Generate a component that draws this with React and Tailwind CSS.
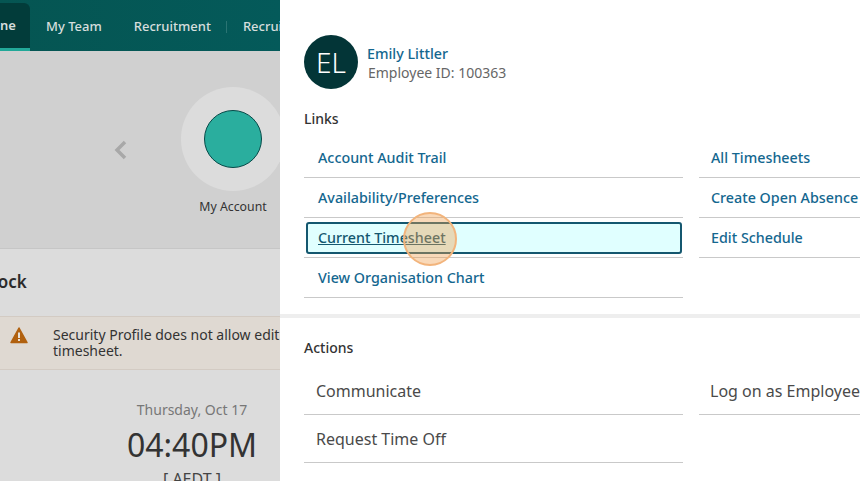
import React from "react";

const linksLeft = ["Account Audit Trail", "Availability/Preferences", "Current Timesheet", "View Organisation Chart"];
const linksRight = ["All Timesheets", "Create Open Absence", "Edit Schedule"];

const LinkRow = ({ label, right }) => {
  if (label === "Current Timesheet") {
    return (
      <div className="h-10 border-b border-[#c9c9c9] flex items-center relative">
        <div className="ml-[2px] h-[32px] w-[376px] bg-[#e0ffff] border-2 border-[#14576f] rounded-[3px] flex items-center pl-[10px]">
          <span className="text-[14.3px] font-medium text-[#14576f] underline whitespace-nowrap">{label}</span>
        </div>
        {/* click marker */}
        <div className="absolute left-[99px] top-[-6px] w-[54px] h-[54px] rounded-full bg-[#f0a050]/40 border-2 border-[#f2b47c]"></div>
      </div>
    );
  }
  return (
    <div className={`h-10 border-b border-[#c9c9c9] flex items-center ${right ? "pl-3" : "pl-[14px]"}`}>
      <span className="text-[14.3px] font-medium text-[#14678f] whitespace-nowrap">{label}</span>
    </div>
  );
};

const ActionRow = ({ label, right }) => (
  <div className={`h-12 border-b border-[#c9c9c9] flex items-center ${right ? "pl-[11px]" : "pl-3"}`}>
    <span className="text-[16px] text-[#4a4a4a] whitespace-nowrap">{label}</span>
  </div>
);

const App = () => {
  return (
    <div className="flex w-[860px] h-[481px] overflow-hidden bg-white font-['Noto_Sans',sans-serif]">
      {/* dimmed page behind the panel */}
      <div className="w-[280px] shrink-0 h-full overflow-hidden flex flex-col bg-[#dcdcdc]">
        <div className="h-[51px] shrink-0 bg-gradient-to-r from-[#055552] to-[#045a5a] flex items-end text-[13px] font-medium text-[#d6dedd] whitespace-nowrap">
          <div className="w-[30px] h-[48px] shrink-0 bg-[#023c3a] border-b-[3px] border-[#22a898] rounded-tr-md flex items-center overflow-hidden">
            <span className="text-[#d6dedd] font-semibold">ne</span>
          </div>
          <div className="h-full flex items-center pl-4 pt-[3px]">My Team</div>
          <div className="h-full flex items-center pl-8 pt-[3px]">Recruitment</div>
          <div className="h-full flex items-center pl-[15px] pt-[3px]">
            <div className="w-px h-3 bg-[#2a7473]"></div>
          </div>
          <div className="h-full flex items-center pl-4 pt-[3px]">Recruitment</div>
        </div>

        <div className="h-[198px] shrink-0 bg-[#d0d0d0] border-b border-[#c6c6c6] flex">
          <div className="w-[181px] shrink-0 flex justify-end items-start pt-[89px] pr-[53px]">
            <svg width="14" height="20" viewBox="0 0 14 20" fill="none" stroke="#a8a8a8" strokeWidth="3.5">
              <path d="M11 2 L3 10 L11 18" />
            </svg>
          </div>
          <div className="w-[104px] shrink-0 flex flex-col items-center pt-[36px]">
            <div className="w-[104px] h-[104px] shrink-0 rounded-full bg-[#dcdcdc] flex items-center justify-center">
              <div className="w-[58px] h-[58px] rounded-full bg-[#2aae9e] border border-[#064a48]"></div>
            </div>
            <span className="mt-[7px] text-[12.3px] text-[#333] whitespace-nowrap">My Account</span>
          </div>
        </div>

        <div className="h-[67px] shrink-0 flex items-center pb-[2px]">
          <span className="text-[17px] font-semibold text-[#2b2b2b] ml-[-18px]">Clock</span>
        </div>

        <div className="h-[54px] shrink-0 bg-[#dfd9d2] border-y border-[#d3cbc3] flex items-start pl-[10px]">
          <svg width="18" height="17" viewBox="0 0 18 17" className="shrink-0 mt-[10px]">
            <path d="M9 1 L17 15.5 L1 15.5 Z" fill="#b1610f" stroke="#b1610f" strokeWidth="1.5" strokeLinejoin="round" />
            <rect x="8" y="5.5" width="2" height="5.5" fill="#e6e0d8" />
            <rect x="8" y="12" width="2" height="2" fill="#e6e0d8" />
          </svg>
          <div className="ml-[25px] mt-[10px] text-[14px] leading-[16px] text-[#333] whitespace-nowrap">
            <div>Security Profile does not allow editing</div>
            <div>timesheet.</div>
          </div>
        </div>

        <div className="flex flex-col items-center w-[384px] pt-[30px]">
          <span className="text-[14px] leading-5 text-[#777]">Thursday, Oct 17</span>
          <span className="mt-[3px] text-[32px] leading-[44px] text-[#333]">04:40PM</span>
          <span className="mt-[2px] text-[16px] leading-5 text-[#444]">[ AEDT ]</span>
        </div>
      </div>

      {/* employee panel */}
      <div className="flex-1 min-w-0 overflow-hidden flex flex-col">
        <div className="px-6 pt-[35px] shrink-0">
          <div className="flex items-start">
            <div className="w-[54px] h-[54px] shrink-0 rounded-full bg-[#033537] flex items-center justify-center text-[28px] font-light text-white">EL</div>
            <div className="ml-[9px] pt-[9px]">
              <div className="text-[14.3px] leading-5 font-medium text-[#14678f] whitespace-nowrap">Emily Littler</div>
              <div className="ml-px text-[14px] leading-[18px] text-[#666] whitespace-nowrap">Employee ID: 100363</div>
            </div>
          </div>

          <div className="mt-5 text-[14px] leading-5 font-medium text-[#333]">Links</div>
          <div className="mt-[9px] flex gap-4">
            <div className="w-[379px] shrink-0">
              {linksLeft.map((label) => (
                <LinkRow key={label} label={label} />
              ))}
            </div>
            <div className="w-[400px] shrink-0">
              {linksRight.map((label) => (
                <LinkRow key={label} label={label} right />
              ))}
            </div>
          </div>
        </div>

        <div className="mt-4 h-1 shrink-0 bg-[#eeeeee]"></div>

        <div className="px-6 pt-[20px] shrink-0">
          <div className="text-[14px] leading-5 font-medium text-[#333]">Actions</div>
          <div className="mt-[9px] flex gap-4">
            <div className="w-[379px] shrink-0">
              <ActionRow label="Communicate" />
              <ActionRow label="Request Time Off" />
            </div>
            <div className="w-[400px] shrink-0">
              <ActionRow label="Log on as Employee" right />
            </div>
          </div>
        </div>
      </div>
    </div>
  );
};

export default App;
